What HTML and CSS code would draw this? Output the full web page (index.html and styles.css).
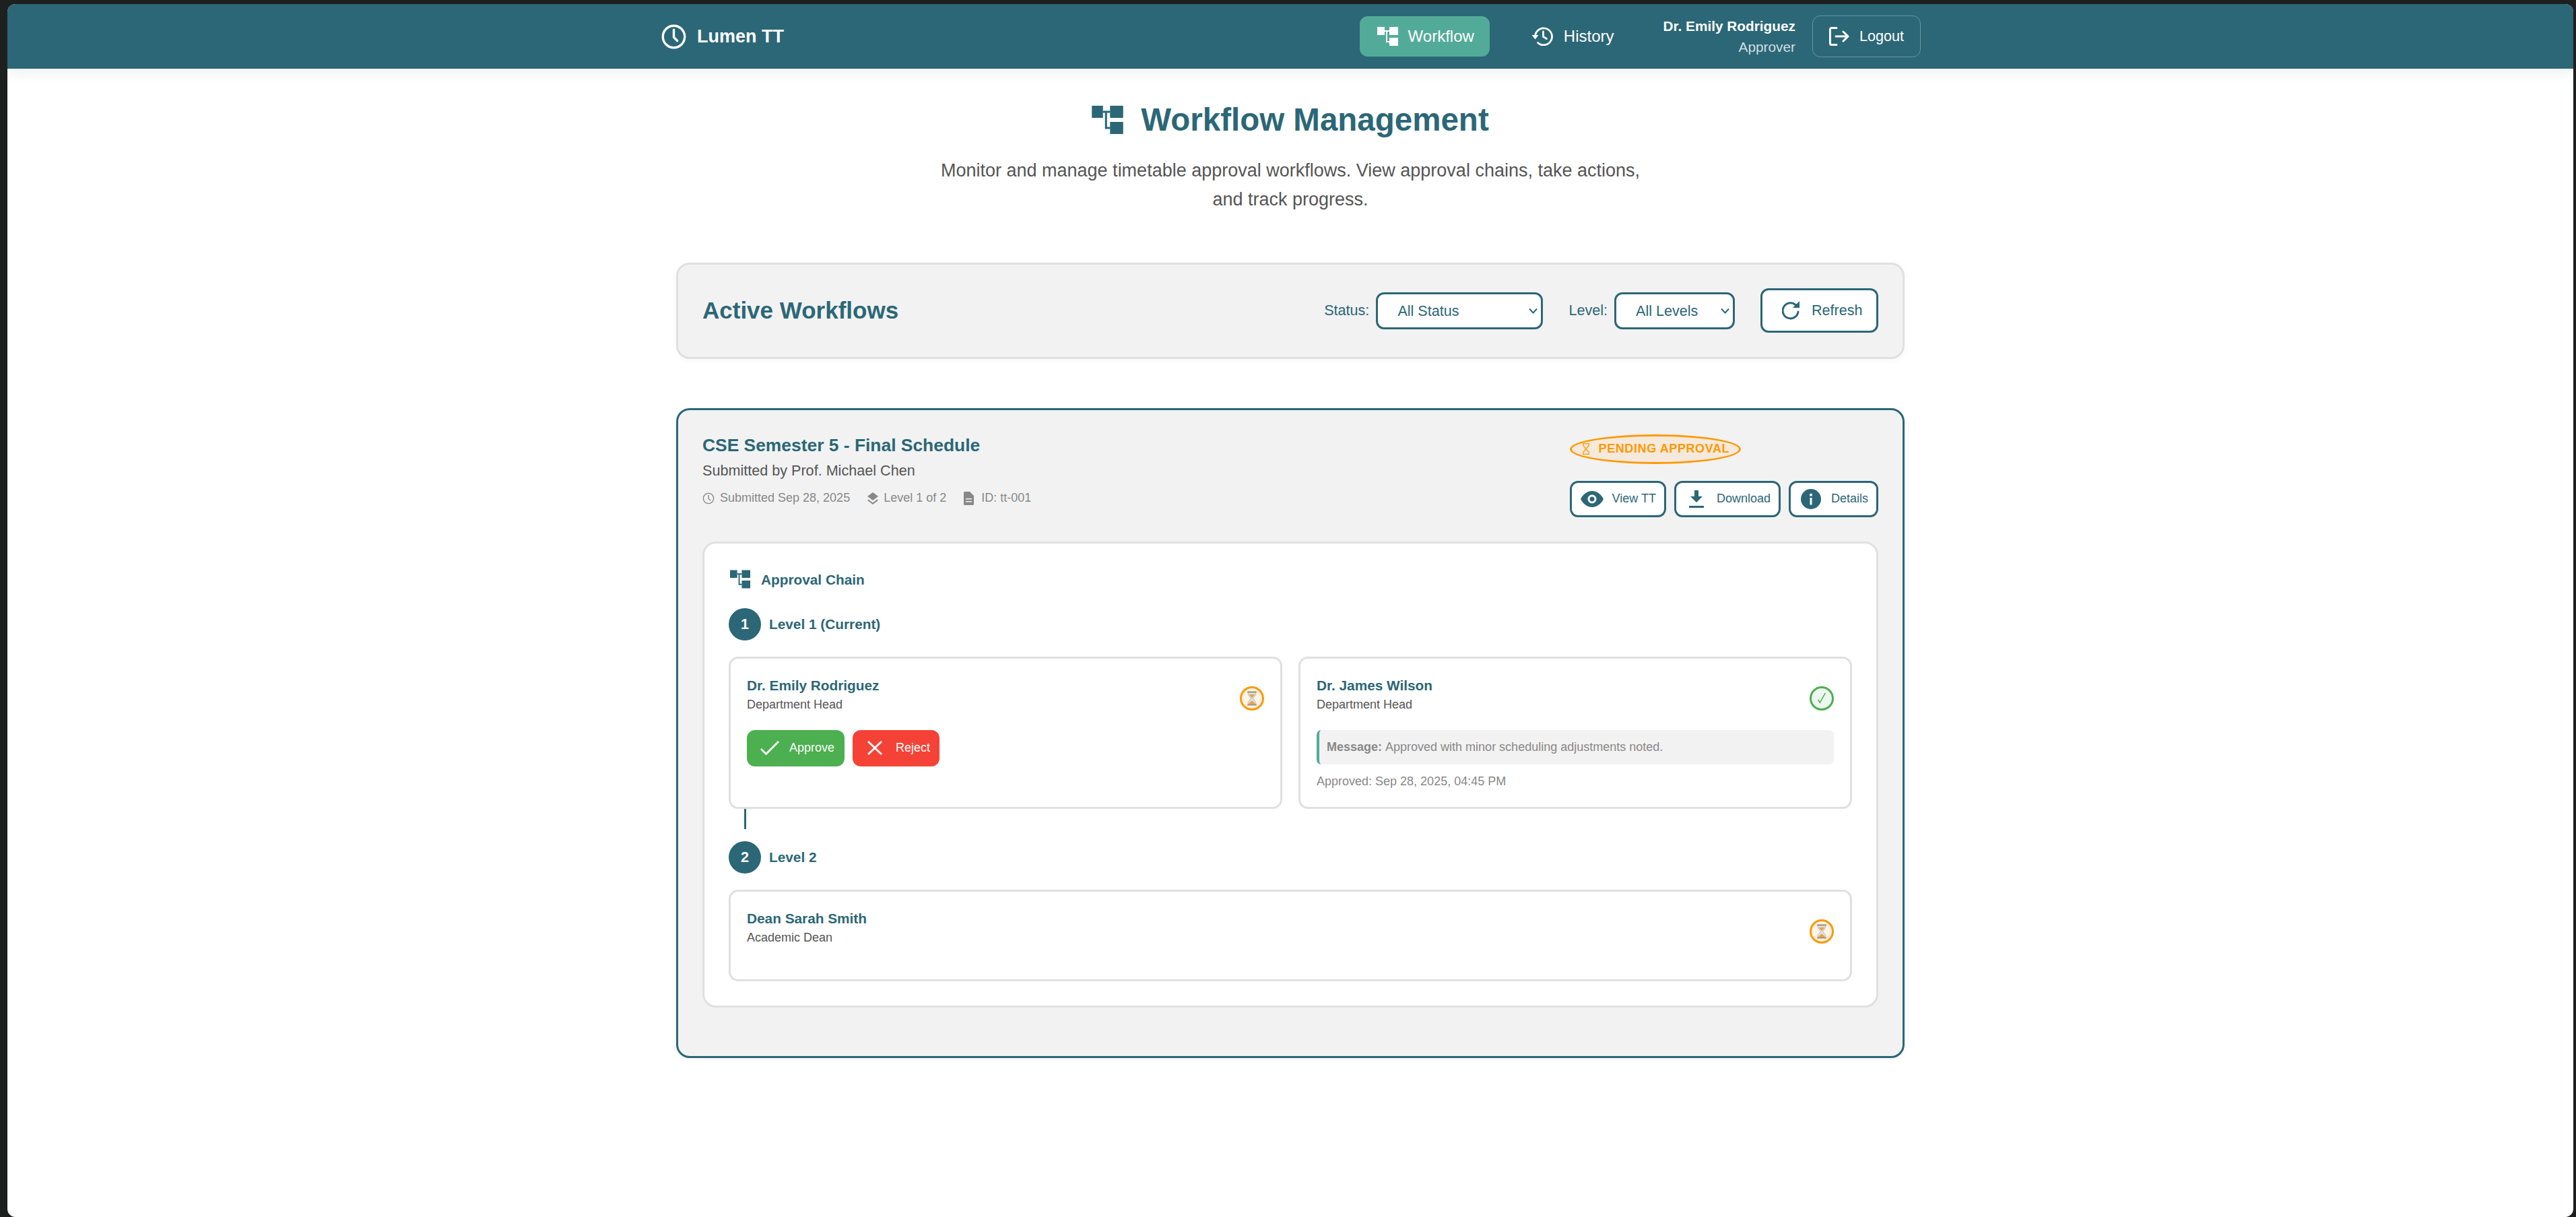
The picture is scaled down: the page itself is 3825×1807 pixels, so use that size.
FILE: index.html
```html
<!doctype html>
<html>
<head>
  <title>Lumen TT - Workflow Management</title>
  <link rel="stylesheet" href="styles.css">
</head>
<body>
  <svg class="defs" width="0" height="0">
    <symbol id="sitemap" viewBox="0 0 31 28">
      <path d="M0 0h11v12H0zM18 0h13v12H18zM18 16h13v12H18z"/>
      <path d="M11 5h7v2h-7zM13 7h2v14h3v2h-5z"/>
    </symbol>
  </svg>

  <div class="app">
    <nav class="navbar">
      <div class="nav-inner">
        <a class="logo">
          <svg class="logo-icon" viewBox="0 0 24 24" fill="none" stroke="currentColor" stroke-width="2" stroke-linecap="round" stroke-linejoin="round"><circle cx="12" cy="12" r="9.5"/><path d="M12 6v6.5l3 3"/></svg>
          Lumen TT
        </a>
        <div class="nav-links">
          <a class="nav-link active"><svg class="nav-icon-map"><use href="#sitemap"/></svg>Workflow</a>
          <a class="nav-link"><svg class="nav-icon-history" viewBox="0 0 32 28" fill="none" stroke="currentColor" stroke-width="2.8"><path d="M5 14a12.500 12.500 0 1 1 4 9.500" stroke-linecap="round"/><path d="M17 7v7.500l5 3" stroke-linecap="round" stroke-linejoin="round"/><path d="M0 12h10l-5 6.500z" fill="currentColor" stroke="none"/></svg>History</a>
        </div>
        <div class="user-info">
          <span class="user-name">Dr. Emily Rodriguez</span>
          <span class="user-role">Approver</span>
        </div>
        <button class="logout-btn">
          <svg class="logout-icon" viewBox="0 0 30 28" fill="none" stroke="currentColor" stroke-width="3" stroke-linecap="round" stroke-linejoin="round"><path d="M11 1.500H3.500a2 2 0 0 0-2 2v21a2 2 0 0 0 2 2H11"/><path d="M10 14h18M21 7l7 7-7 7"/></svg>
          Logout
        </button>
      </div>
    </nav>

    <main class="page">
      <header class="page-header">
        <h1><svg class="title-icon"><use href="#sitemap"/></svg>Workflow Management</h1>
        <p>Monitor and manage timetable approval workflows. View approval chains, take actions, and track progress.</p>
      </header>

      <section class="filter-bar">
        <h2>Active Workflows</h2>
        <div class="filters">
          <label class="filter-label">Status:</label>
          <select class="filter-select status-select"><option>All Status</option></select>
          <label class="filter-label level-label">Level:</label>
          <select class="filter-select level-select"><option>All Levels</option></select>
          <button class="refresh-btn">
            <svg class="refresh-icon" viewBox="0 0 26 30" fill="none" stroke="currentColor" stroke-width="3"><path d="M20 6.500A11.500 11.500 0 1 0 24 17" stroke-linecap="round"/><path d="M26 1v10H16z" fill="currentColor" stroke="none"/></svg>
            Refresh
          </button>
        </div>
      </section>

      <section class="workflow-card">
        <div class="workflow-head">
          <div class="workflow-info">
            <h3>CSE Semester 5 - Final Schedule</h3>
            <p class="submitter">Submitted by Prof. Michael Chen</p>
            <div class="meta">
              <span class="meta-item"><svg class="meta-clock" viewBox="0 0 20 20" fill="none" stroke="currentColor" stroke-width="1.500" stroke-linecap="round"><circle cx="10" cy="10" r="8.500"/><path d="M10 5v5.500l3 2.500"/></svg>Submitted Sep 28, 2025</span>
              <span class="meta-item"><svg class="meta-layers" viewBox="0 0 16 18" fill="currentColor"><path d="M8 0l8 6-8 6-8-6z"/><path d="M1.500 10.500L8 15.500l6.500-5 1.500 1.500L8 18 0 12z"/></svg>Level 1 of 2</span>
              <span class="meta-item"><svg class="meta-doc" viewBox="0 0 15 20" fill="currentColor"><path fill-rule="evenodd" d="M0 1.500A1.500 1.500 0 0 1 1.500 0H9l6 6v12.500a1.500 1.500 0 0 1-1.500 1.500h-12A1.500 1.500 0 0 1 0 18.500zM3 10v1.500h9V10zM3 14v1.500h9V14z"/></svg>ID: tt-001</span>
            </div>
          </div>
          <div class="workflow-side">
            <span class="badge">
              <svg class="badge-icon" viewBox="0 0 12 17" fill="none" stroke="currentColor" stroke-width="1.300"><path d="M1 .7h10M1 16.300h10M1.800.7v2.800L10.200 13.500v2.800M10.200.7v2.800L1.800 13.500v2.800"/></svg>
              PENDING APPROVAL
            </span>
            <div class="side-actions">
              <button class="outline-btn view-btn"><svg class="eye-icon" viewBox="0 0 34 24"><path fill="currentColor" fill-rule="evenodd" d="M17 0c8 0 14 6 17 12-3 6-9 12-17 12S3 18 0 12C3 6 9 0 17 0zm0 5.500a6.500 6.500 0 1 0 0 13 6.500 6.500 0 0 0 0-13zm0 3a3.500 3.500 0 1 1 0 7 3.500 3.500 0 0 1 0-7z"/></svg>View TT</button>
              <button class="outline-btn download-btn"><svg class="download-icon" viewBox="0 0 22 26" fill="currentColor"><path d="M8 0h6v9h6l-9 9-9-9h6zM0 23h22v3H0z"/></svg>Download</button>
              <button class="outline-btn details-btn"><svg class="info-icon" viewBox="0 0 30 30"><circle cx="15" cy="15" r="15" fill="currentColor"/><path fill="#fff" d="M13.200 7h3.600v3.600h-3.600zM13.500 13h3v10.500h-3z"/></svg>Details</button>
            </div>
          </div>
        </div>

        <div class="chain">
          <h4 class="chain-title"><svg class="chain-icon"><use href="#sitemap"/></svg>Approval Chain</h4>

          <div class="level-head">
            <span class="level-num">1</span>
            <span class="level-name">Level 1 (Current)</span>
          </div>
          <div class="approvers two-col">
            <div class="approver">
              <div class="approver-head">
                <div class="approver-who">
                  <div class="approver-name">Dr. Emily Rodriguez</div>
                  <div class="approver-role">Department Head</div>
                </div>
                <span class="status-dot pending">
                  <svg class="glass" viewBox="0 0 14 22" preserveAspectRatio="none"><path fill="#d5e6ef" stroke="#b9b2a6" stroke-width=".8" d="M2 2h10v3.500L8.200 11 12 16.500V20H2v-3.500L5.800 11 2 5.500z"/><path fill="#f0a33c" d="M3 5h8L7 10.500zM3 19.500c0-2.500 2-3.500 4-5 2 1.500 4 2.500 4 5z"/><path fill="#a88f6a" d="M1 .5h12V2.500H1zM1 19.500h12v2H1z"/></svg>
                </span>
              </div>
              <div class="decision">
                <button class="decide-btn approve"><svg class="check-icon" viewBox="0 0 28 21" fill="none" stroke="currentColor" stroke-width="2.800"><path d="M1 12l7.500 7.500L27 1"/></svg>Approve</button>
                <button class="decide-btn reject"><svg class="x-icon" viewBox="0 0 22 21" fill="none" stroke="currentColor" stroke-width="2.800"><path d="M1 1l20 19M21 1L1 20"/></svg>Reject</button>
              </div>
            </div>
            <div class="approver">
              <div class="approver-head">
                <div class="approver-who">
                  <div class="approver-name">Dr. James Wilson</div>
                  <div class="approver-role">Department Head</div>
                </div>
                <span class="status-dot approved">
                  <svg class="tick" viewBox="0 0 16 20" fill="none" stroke="currentColor" stroke-width="1.700"><path d="M2 12l3 5L14 1"/></svg>
                </span>
              </div>
              <div class="message"><strong>Message:</strong> Approved with minor scheduling adjustments noted.</div>
              <div class="approved-at">Approved: Sep 28, 2025, 04:45 PM</div>
            </div>
          </div>

          <div class="connector"></div>

          <div class="level-head">
            <span class="level-num">2</span>
            <span class="level-name">Level 2</span>
          </div>
          <div class="approvers">
            <div class="approver">
              <div class="approver-head">
                <div class="approver-who">
                  <div class="approver-name">Dean Sarah Smith</div>
                  <div class="approver-role">Academic Dean</div>
                </div>
                <span class="status-dot pending">
                  <svg class="glass" viewBox="0 0 14 22" preserveAspectRatio="none"><path fill="#d5e6ef" stroke="#b9b2a6" stroke-width=".8" d="M2 2h10v3.500L8.200 11 12 16.500V20H2v-3.500L5.800 11 2 5.500z"/><path fill="#f0a33c" d="M3 5h8L7 10.500zM3 19.500c0-2.500 2-3.500 4-5 2 1.500 4 2.500 4 5z"/><path fill="#a88f6a" d="M1 .5h12V2.500H1zM1 19.500h12v2H1z"/></svg>
                </span>
              </div>
            </div>
          </div>
        </div>
      </section>
    </main>
  </div>
</body>
</html>
```

FILE: styles.css
```css
* { box-sizing: border-box; }

html, body { height: 100%; }

body {
  margin: 0;
  padding: 6px 4px 0 11px;
  background: #1e2020;
  font-family: "Liberation Sans", Arial, sans-serif;
  color: #2b6777;
}

.defs { position: absolute; }

button, select {
  font-family: inherit;
}

.app {
  min-height: 1801px;
  background: #fff;
  border-radius: 12px;
  overflow: hidden;
}

/* navbar */
.navbar {
  height: 96px;
  background: #2b6777;
  box-shadow: 0 5px 20px rgba(43, 103, 119, 0.1);
  color: #fff;
  position: relative;
}
.nav-inner {
  width: 1872px;
  height: 96px;
  margin: 0 auto;
  display: flex;
  align-items: center;
}
.logo {
  display: flex;
  align-items: center;
  gap: 14px;
  font-size: 27px;
  font-weight: bold;
}
.logo-icon { width: 41px; height: 41px; }
.nav-links {
  margin-left: auto;
  display: flex;
  align-items: center;
  gap: 36px;
}
.nav-link {
  height: 60px;
  display: flex;
  align-items: center;
  gap: 15px;
  padding: 0 23px 0 26px;
  border-radius: 12px;
  font-size: 24px;
}
.nav-link.active { background: #52ab98; }
.nav-icon-map { width: 31px; height: 28px; fill: #fff; }
.nav-icon-history { width: 33px; height: 28px; }
.user-info {
  margin-left: 50px;
  display: flex;
  flex-direction: column;
  align-items: flex-end;
}
.user-name { font-size: 20.8px; font-weight: bold; line-height: 31px; }
.user-role { font-size: 20.8px; line-height: 31px; color: rgba(255, 255, 255, 0.8); }
.logout-btn {
  margin-left: 25px;
  width: 161px;
  height: 62px;
  display: flex;
  align-items: center;
  justify-content: center;
  gap: 15px;
  background: transparent;
  border: 1.6px solid rgba(255, 255, 255, 0.3);
  border-radius: 12px;
  color: #fff;
  font-size: 21.6px;
}
.logout-icon { width: 30px; height: 28px; }

/* page */
.page {
  width: 1824px;
  margin: 0 auto;
}
.page-header {
  padding-top: 40px;
  text-align: center;
}
.page-header h1 {
  margin: 0 0 17.5px;
  display: flex;
  align-items: center;
  justify-content: center;
  gap: 26px;
  font-size: 47.5px;
  line-height: 72px;
}
.title-icon { width: 47px; height: 42px; fill: #2b6777; }
.page-header p {
  width: 1080px;
  margin: 0 auto;
  font-size: 27px;
  line-height: 43.2px;
  color: #555;
}

.filter-bar {
  margin-top: 72px;
  height: 143px;
  display: flex;
  align-items: center;
  justify-content: space-between;
  padding: 0 36px;
  background: #f2f2f2;
  border: 3px solid #e0e0e0;
  border-radius: 20px;
  box-shadow: 0 2px 10px rgba(0, 0, 0, 0.04);
}
.filter-bar h2 {
  margin: 0;
  font-size: 35px;
}
.filters {
  display: flex;
  align-items: center;
}
.filter-label { font-size: 21.6px; margin-right: 10px; }
.level-label { margin-left: 38px; }
.filter-select {
  appearance: none;
  height: 55px;
  padding: 0 29px;
  background: #fff url("data:image/svg+xml,%3Csvg xmlns='http://www.w3.org/2000/svg' viewBox='0 0 13 9'%3E%3Cpath d='M1 1.500l5.500 6 5.500-6' fill='none' stroke='%232b6777' stroke-width='2'/%3E%3C/svg%3E") no-repeat right 5px center / 13px 9px;
  border: 3px solid #2b6777;
  border-radius: 12px;
  color: #2b6777;
  font-size: 21.6px;
}
.status-select { width: 248px; }
.level-select { width: 179px; }
.refresh-btn {
  margin-left: 38px;
  width: 175px;
  height: 66px;
  display: flex;
  align-items: center;
  gap: 18px;
  padding: 0 0 0 29px;
  background: #fff;
  border: 3px solid #2b6777;
  border-radius: 12px;
  color: #2b6777;
  font-size: 21.6px;
}
.refresh-icon { width: 26px; height: 30px; }

/* workflow card */
.workflow-card {
  margin-top: 73px;
  padding: 36px 36px 72px;
  background: #f2f2f2;
  border: 3px solid #2b6777;
  border-radius: 20px;
  box-shadow: 0 2px 10px rgba(0, 0, 0, 0.04);
}
.workflow-head {
  display: flex;
  justify-content: space-between;
  height: 159px;
}
.workflow-info h3 {
  margin: 0;
  font-size: 26.4px;
  line-height: 32px;
}
.submitter {
  margin: 6px 0 0;
  font-size: 21.6px;
  line-height: 32px;
  color: #555;
}
.meta {
  margin-top: 11.5px;
  display: flex;
  gap: 26px;
  font-size: 18px;
  line-height: 27px;
  color: #888;
}
.meta-item {
  display: flex;
  align-items: center;
  gap: 8px;
}
.meta-clock { width: 18px; height: 18px; }
.meta-layers { width: 16px; height: 18px; }
.meta-doc { width: 15px; height: 20px; margin-right: 3px; }

.workflow-side {
  display: flex;
  flex-direction: column;
  align-items: flex-end;
}
.badge {
  align-self: flex-start;
  width: 254px;
  height: 44px;
  display: flex;
  align-items: center;
  gap: 13px;
  padding-left: 15px;
  background: #f5e9dc;
  border: 3px solid #ff9800;
  border-radius: 50%;
  color: #ff9800;
  font-size: 18px;
  font-weight: bold;
  letter-spacing: 0.6px;
}
.badge-icon { width: 12px; height: 17px; }
.side-actions {
  margin-top: 25px;
  display: flex;
  gap: 12px;
}
.outline-btn {
  height: 54px;
  display: flex;
  align-items: center;
  background: #fff;
  border: 3px solid #2b6777;
  border-radius: 12px;
  color: #2b6777;
  font-size: 18px;
}
.view-btn { gap: 13px; padding: 0 12px 0 13px; }
.download-btn { gap: 19px; padding: 0 12px 0 19px; }
.details-btn { gap: 15px; padding: 0 12px 0 15px; }
.eye-icon { width: 34px; height: 24px; }
.download-icon { width: 22px; height: 26px; }
.info-icon { width: 30px; height: 30px; }

/* approval chain */
.chain {
  padding: 36px;
  background: #fff;
  border: 3px solid #e0e0e0;
  border-radius: 20px;
}
.chain-title {
  margin: 0 0 25px;
  display: flex;
  align-items: center;
  gap: 16px;
  font-size: 20.8px;
  line-height: 35px;
}
.chain-icon { width: 30px; height: 28px; margin-left: 2px; fill: #2b6777; }
.level-head {
  display: flex;
  align-items: center;
  gap: 12px;
  margin-bottom: 24px;
}
.level-num {
  width: 48px;
  height: 48px;
  display: flex;
  align-items: center;
  justify-content: center;
  background: #2b6777;
  border-radius: 50%;
  color: #fff;
  font-size: 21.6px;
  font-weight: bold;
}
.level-name {
  font-size: 20.8px;
  font-weight: bold;
}
.approvers {
  display: grid;
  grid-template-columns: 1fr;
  gap: 24px;
}
.approvers.two-col { grid-template-columns: 1fr 1fr; }
.approver {
  padding: 24px;
  background: #fff;
  border: 3px solid #e0e0e0;
  border-radius: 14px;
}
.approver-head {
  display: flex;
  align-items: center;
  justify-content: space-between;
  height: 70px;
  margin-bottom: 12px;
}
.approver-who { height: 70px; }
.approver-name {
  font-size: 20.8px;
  font-weight: bold;
  line-height: 31px;
}
.approver-role {
  font-size: 18px;
  line-height: 27px;
  color: #555;
}
.status-dot {
  width: 36px;
  height: 36px;
  display: flex;
  align-items: center;
  justify-content: center;
  border-radius: 50%;
  border: 3px solid;
}
.status-dot.pending { border-color: #ff9800; background: #fff3e6; }
.status-dot.approved { border-color: #4caf50; background: #edf7ee; color: #4caf50; }
.glass { width: 16px; height: 22px; flex: none; }
.tick { width: 16px; height: 18px; flex: none; }
.decision {
  display: flex;
  gap: 12px;
}
.decide-btn {
  height: 54px;
  display: flex;
  align-items: center;
  gap: 15px;
  border: 0;
  border-radius: 12px;
  color: #fff;
  font-size: 18px;
}
.approve { width: 145px; padding-left: 20px; background: #4caf50; }
.reject { width: 129px; padding-left: 22px; background: #f44336; gap: 20px; }
.check-icon { width: 28px; height: 21px; }
.x-icon { width: 22px; height: 21px; }
.message {
  height: 51px;
  display: flex;
  align-items: center;
  gap: 5px;
  padding-left: 11px;
  background: #f2f2f2;
  border-left: 4px solid #52ab98;
  border-radius: 7px;
  font-size: 18px;
  color: #888;
}
.approved-at {
  margin-top: 12px;
  font-size: 18px;
  line-height: 27px;
  color: #888;
}
.connector {
  width: 3px;
  height: 30px;
  margin-left: 23px;
  margin-bottom: 18px;
  background: #2b6777;
}
```
